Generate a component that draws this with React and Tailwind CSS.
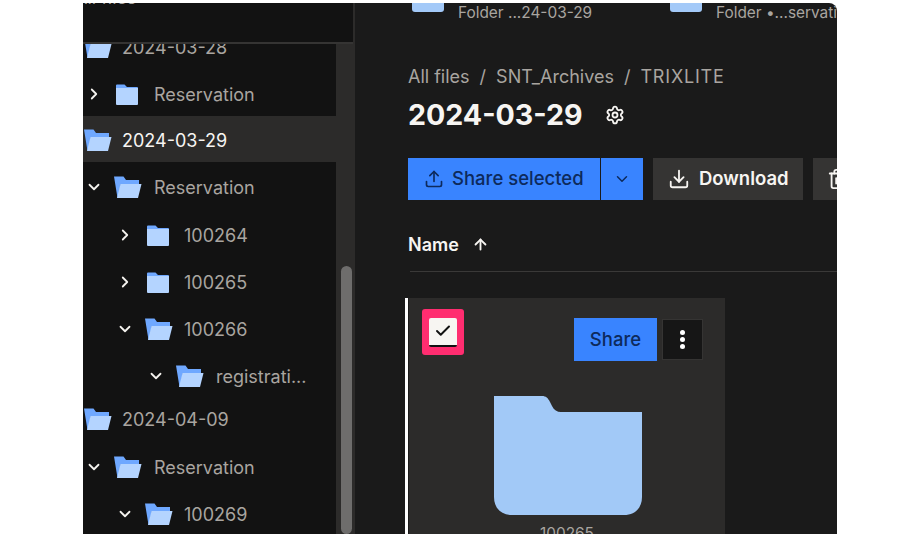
import { Settings, Upload, ChevronDown, ChevronRight, Download, Trash2, ArrowUp, Check } from 'lucide-react';

function ClosedFolder() {
    return (
        <svg width="24" height="24" viewBox="0 0 24 24" className="shrink-0">
            <path d="M1 3.5a1 1 0 0 1 1-1h7.5l2.5 2.5h10a1 1 0 0 1 1 1V6H1z" fill="#6fa8ff" />
            <path d="M1 6h22v16a1 1 0 0 1-1 1H2a1 1 0 0 1-1-1z" fill="#b4d4ff" />
        </svg>
    );
}

function OpenFolder() {
    return (
        <svg width="29" height="24" viewBox="0 0 29 24" className="shrink-0">
            <path d="M1 1.5h9.5L13 5h13v4H8l-3 14H4.5z" fill="#6fa8ff" />
            <path d="M7.5 9H28.5L25 23H4z" fill="#b4d4ff" />
        </svg>
    );
}

const rows = [
    { label: '2024-03-28', depth: 0, open: true, h: 'h-[46px]', noChevron: true },
    { label: 'Reservation', depth: 1, open: false, h: 'h-[46px] pt-[2px]' },
    { label: '2024-03-29', depth: 0, open: true, h: 'h-[46px] pt-[2px]', noChevron: true, active: true },
    { label: 'Reservation', depth: 1, open: true, h: 'h-[49px]' },
    { label: '100264', depth: 2, open: false, h: 'h-[47px]' },
    { label: '100265', depth: 2, open: false, h: 'h-[47px]' },
    { label: '100266', depth: 2, open: true, h: 'h-[47px]' },
    { label: 'registrati...', depth: 3, open: true, h: 'h-[47px]' },
    { label: '2024-04-09', depth: 0, open: true, h: 'h-[44px] pb-[4px]', noChevron: true },
    { label: 'Reservation', depth: 1, open: true, h: 'h-[47px]' },
    { label: '100269', depth: 2, open: true, h: 'h-[47px]' },
];

const indents = ['pl-0', 'pl-[2px]', 'pl-[33px]', 'pl-[64px]'];
const textIndent = ['ml-[10px]', 'ml-[12px]', 'ml-[11px]', 'ml-[12px]'];

function TreeRow({ row }) {
    return (
        <div className={`flex items-center shrink-0 ${row.h} ${indents[row.depth]} ${row.active ? 'bg-[#2c2b2a]' : ''}`}>
            {!row.noChevron && (
                <span className="w-[18px] mr-[10px] flex justify-center shrink-0">
                    {row.open
                        ? <ChevronDown size={18} strokeWidth={2.4} className="text-[#f4f2ee]" />
                        : <ChevronRight size={18} strokeWidth={2.4} className="text-[#f4f2ee]" />}
                </span>
            )}
            {row.open ? <OpenFolder /> : <span className="flex ml-[2px] mr-[3px]"><ClosedFolder /></span>}
            <span className={`text-[18px] leading-none whitespace-nowrap mt-[2px] ${textIndent[row.depth]} ${row.active ? 'text-[#f7f5f2]' : 'text-[#a9a5a0]'}`}>
                {row.label}
            </span>
        </div>
    );
}

function Sidebar() {
    return (
        <aside className="w-[272px] shrink-0 flex flex-col bg-[#121212] h-full border-r-2 border-[#2c2b2a]">
            <div className="h-[41px] shrink-0 border-b-2 border-[#353433] overflow-hidden">
                <p className="text-[#a9a5a0] text-[18px] leading-none -mt-[14px] -ml-[8px]">All files</p>
            </div>
            <div className="flex flex-1 min-h-0">
                <div className="flex-1 min-w-0 overflow-hidden">
                    <div className="-mt-[20px] flex flex-col">
                        {rows.map((row, i) => <TreeRow key={i} row={row} />)}
                    </div>
                </div>
                <div className="w-[17px] shrink-0 bg-[#2c2b2a] flex flex-col items-center pl-[3px]">
                    <div className="w-[11px] mt-[222px] rounded-full bg-[#6e6d6c] flex-1" />
                </div>
            </div>
        </aside>
    );
}

function SuggestedItem({ label, width }) {
    return (
        <div className={`flex shrink-0 items-start ${width}`}>
            <div className="w-[32px] h-[9px] bg-[#a3c9f8] rounded-b-[3px]" />
            <span className="ml-[14px] mt-[2px] text-[15.4px] leading-none text-[#a9a5a0] whitespace-nowrap">{label}</span>
        </div>
    );
}

function Main() {
    return (
        <main className="flex-1 min-w-0 bg-[#1a1a1a] rounded-tr-lg overflow-hidden h-full pl-[53px]">
            <div className="flex ml-[4px] h-[55px]">
                <SuggestedItem label="Folder ...24-03-29" width="w-[258px]" />
                <SuggestedItem label="Folder •...servation" width="w-[200px]" />
            </div>
            <nav className="flex items-center gap-[10px] text-[18px] leading-none text-[#a9a5a0] h-[38px] whitespace-nowrap">
                <span>All files</span><span>/</span><span>SNT_Archives</span><span>/</span><span className="tracking-[0.8px]">TRIXLITE</span>
            </nav>
            <div className="flex items-center h-[38px]">
                <h1 className="text-[28.6px] leading-none font-bold text-[#f7f5f2] whitespace-nowrap">2024-03-29</h1>
                <Settings size={20} strokeWidth={2.2} className="ml-[22px] text-[#f7f5f2]" />
            </div>
            <div className="flex mt-[24px] h-[42px] whitespace-nowrap">
                <button className="w-[192px] shrink-0 bg-[#3984ff] text-[#0d2a5c] flex items-center pl-[16px] gap-[8px] text-[18.5px] font-medium">
                    <Upload size={20} />
                    Share selected
                </button>
                <button className="w-[42px] shrink-0 ml-[1px] bg-[#3984ff] text-[#0d2a5c] flex items-center justify-center">
                    <ChevronDown size={18} />
                </button>
                <button className="w-[150px] shrink-0 ml-[10px] bg-[#353433] text-[#f7f5f2] flex items-center pl-[15px] gap-[9px] text-[18.5px] font-semibold">
                    <Download size={22} />
                    Download
                </button>
                <button className="w-[60px] shrink-0 ml-[10px] bg-[#353433] text-[#f7f5f2] flex items-center pl-[14px]">
                    <Trash2 size={22} />
                </button>
            </div>
            <div className="flex items-center mt-[29px] h-[30px] text-[18px] font-semibold text-[#f7f5f2]">
                Name
                <ArrowUp size={17} strokeWidth={2.6} className="ml-[13px]" />
            </div>
            <div className="h-[1px] bg-[#3a3938] ml-[2px] mt-[12px]" />
            <div className="flex mt-[26px] -ml-[3px]">
                <div className="w-[3px] bg-white shrink-0" />
                <section className="w-[316px] ml-[1px] h-[240px] bg-[#2c2b2a] shrink-0 flex flex-col">
                    <div className="flex items-start pl-[13px] pt-[11px]">
                        <div className="w-[42px] h-[46px] bg-[#ff2d70] rounded-[3px] flex items-center justify-center">
                            <div className="w-[28px] h-[29px] bg-[#f7f5f2] border-b-2 border-[#111] rounded-[2px] flex items-center justify-center">
                                <Check size={18} strokeWidth={2.6} className="text-[#111]" />
                            </div>
                        </div>
                        <button className="ml-[110px] mt-[9px] w-[83px] h-[43px] bg-[#3984ff] text-[#0d2a5c] text-[18.5px] font-medium">Share</button>
                        <button className="ml-[5px] mt-[10px] w-[41px] h-[41px] bg-[#161616] border border-[#353433] flex flex-col items-center justify-center gap-[2px]">
                            <span className="w-[5px] h-[5px] rounded-full bg-white" />
                            <span className="w-[5px] h-[5px] rounded-full bg-white" />
                            <span className="w-[5px] h-[5px] rounded-full bg-white" />
                        </button>
                    </div>
                    <div className="flex justify-center mt-[34px] pl-[2px] shrink-0">
                        <svg width="150" height="121" viewBox="0 0 150 121">
                            <path d="M1 1H49c4 0 6 2 8 6l2 4c2 4 5 6 9 6H149V102c0 11-7 18-18 18H19c-11 0-18-7-18-18z" fill="#a2c9f7" />
                        </svg>
                    </div>
                    <p className="text-center text-[15.4px] leading-none text-[#a9a5a0] mt-[10px]">100265</p>
                </section>
            </div>
        </main>
    );
}

export default function App() {
    return (
        <div className="w-[920px] h-[534px] bg-white overflow-hidden pl-[83px] pr-[83px] pt-[3px] font-['Inter',sans-serif]">
            <div className="flex h-[531px]">
                <Sidebar />
                <Main />
            </div>
        </div>
    );
}
